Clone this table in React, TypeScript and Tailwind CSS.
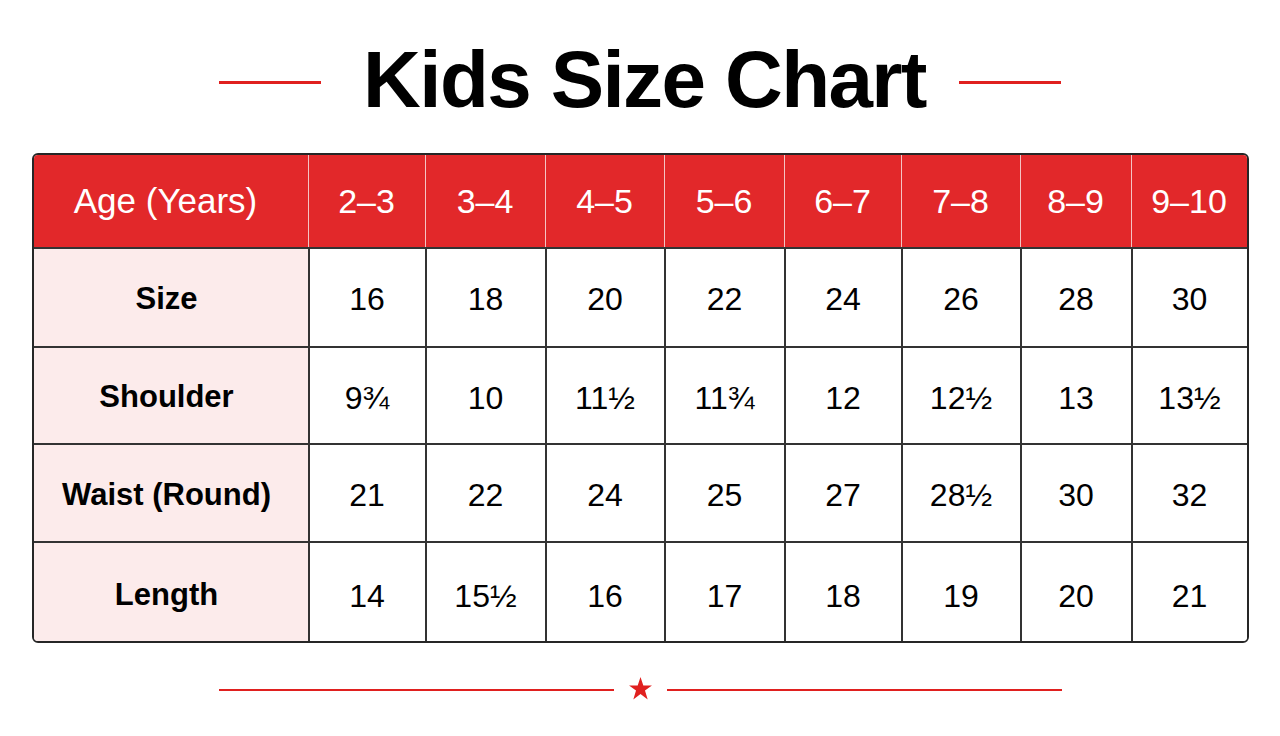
import React from "react";

const headers = ["2–3", "3–4", "4–5", "5–6", "6–7", "7–8", "8–9", "9–10"];
const rows: { label: string; values: string[]; h: string; pt: string }[] = [
  { label: "Size", values: ["16", "18", "20", "22", "24", "26", "28", "30"], h: "h-[99px]", pt: "pt-[3px]" },
  { label: "Shoulder", values: ["9¾", "10", "11½", "11¾", "12", "12½", "13", "13½"], h: "h-[97px]", pt: "pt-[4px]" },
  { label: "Waist (Round)", values: ["21", "22", "24", "25", "27", "28½", "30", "32"], h: "h-[98px]", pt: "pt-[4px]" },
  { label: "Length", values: ["14", "15½", "16", "17", "18", "19", "20", "21"], h: "h-[100px]", pt: "pt-[7px]" },
];

const cols = "grid grid-cols-[274px_117px_120px_119px_120px_117px_119px_111px_116px]";

export default function App() {
  return (
    <div
      className="w-[1280px] h-[736px] bg-white flex flex-col items-center overflow-hidden"
      style={{ fontFamily: '"Liberation Sans", Arial, sans-serif' }}
    >
      <div className="mt-[40px] flex items-center h-[80px]">
        <div className="w-[102px] h-[3px] bg-[#e0201f] mr-[42px] mt-[4px]" />
        <h1 className="text-[80px] leading-none font-bold text-black tracking-[-1.6px]">Kids Size Chart</h1>
        <div className="w-[102px] h-[3px] bg-[#e0201f] ml-[33px] mt-[4px]" />
      </div>

      <div className="mt-[33px] w-[1217px] border-2 border-[#262626] rounded-[6px] overflow-hidden">
        <div className={`${cols} h-[92px] bg-[#e2282a] text-white text-[34px]`}>
          <div className="flex items-center justify-center pr-[10px] text-[35px]">Age (Years)</div>
          {headers.map((h) => (
            <div key={h} className="flex items-center justify-center border-l border-[#f4c4c4]">
              {h}
            </div>
          ))}
        </div>
        {rows.map((r) => (
          <div key={r.label} className={`${cols} ${r.h} border-t-2 border-[#333333]`}>
            <div className={`flex items-center justify-center pr-[8px] ${r.pt} bg-[#fcebeb] text-[31px] font-bold text-black`}>
              {r.label}
            </div>
            {r.values.map((v, i) => (
              <div
                key={i}
                className={`flex items-center justify-center ${r.pt} border-l-2 border-[#333333] text-[32px] text-black bg-white`}
              >
                {v}
              </div>
            ))}
          </div>
        ))}
      </div>

      <div className="mt-[33px] flex items-center">
        <div className="w-[395px] h-[2px] bg-[#e0201f]" />
        <svg width="25" height="25" viewBox="0 0 24 24" className="mx-[14px] mb-[3px]">
          <path
            d="M12 1 L14.7 9 L23 9 L16.3 14 L18.9 22.5 L12 17.3 L5.1 22.5 L7.7 14 L1 9 L9.3 9 Z"
            fill="#e0201f"
          />
        </svg>
        <div className="w-[395px] h-[2px] bg-[#e0201f]" />
      </div>
    </div>
  );
}
